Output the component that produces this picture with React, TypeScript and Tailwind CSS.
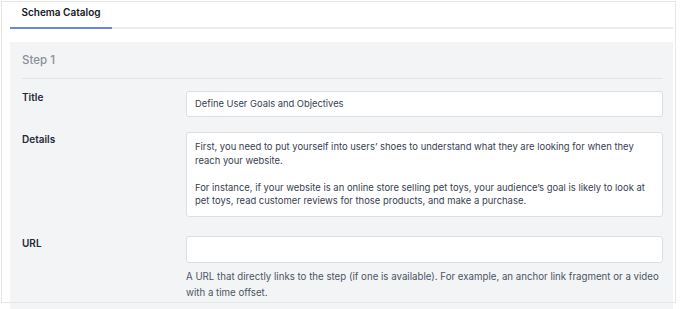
import React from "react";

export default function App() {
  return (
    <div
      className="relative w-[680px] h-[309px] overflow-hidden bg-white pt-[2px] pl-[10px] text-[#1f2937]"
      style={{ fontFamily: "Inter, 'Noto Sans', sans-serif" }}
    >
      <div className="flex w-[663px] border-b-2 border-[#ececee]">
        <div className="-mb-[2px] w-[102px] border-b-2 border-[#6b86e2] pt-[4px] pb-[9px] text-center text-[10px] leading-[12px] font-semibold text-[#111827]">
          Schema Catalog
        </div>
      </div>

      <div className="mt-[13px] w-[663px] h-[280px] bg-[#f3f4f6] pl-[12px] pr-[10px]">
        <div className="border-b-[1.5px] border-[#e2e4e8] pt-[10px] pb-[10px] text-[11.5px] leading-[16px] font-medium text-[#8a8f98]">
          Step 1
        </div>

        <div className="mt-[12px] flex">
          <div className="w-[164px] shrink-0 text-[10px] leading-[13px] font-semibold text-[#1f2937]">Title</div>
          <div className="flex h-[26px] flex-1 items-center rounded-[3px] border border-[#dcdfe4] bg-white px-[8px] text-[9.35px] text-[#374151]">
            Define User Goals and Objectives
          </div>
        </div>

        <div className="mt-[15px] flex">
          <div className="w-[164px] shrink-0 pt-[1px] text-[10px] leading-[13px] font-semibold text-[#1f2937]">Details</div>
          <div className="h-[85px] flex-1 rounded-[3px] border border-[#dcdfe4] bg-white px-[8px] pt-[7px] text-[9.45px] leading-[13.5px] text-[#374151] whitespace-pre-wrap">
            {"First, you need to put yourself into users’ shoes to understand what they are looking for when they reach your website.\n\nFor instance, if your website is an online store selling pet toys, your audience’s goal is likely to look at pet toys, read customer reviews for those products, and make a purchase."}
          </div>
        </div>

        <div className="mt-[19px] flex">
          <div className="w-[164px] shrink-0 pt-[1px] text-[10px] leading-[13px] font-semibold text-[#1f2937]">URL</div>
          <div className="flex-1">
            <div className="h-[27px] rounded-[3px] border border-[#dcdfe4] bg-white" />
            <p className="mt-[6px] text-[9.7px] leading-[16px] text-[#4b5563]">
              A URL that directly links to the step (if one is available). For example, an anchor link fragment or a video with a time offset.
            </p>
          </div>
        </div>
      </div>

      <div className="pointer-events-none absolute left-[1px] top-[1px] h-[302px] w-[675px] border border-[#e6e6e8]" />
    </div>
  );
}
